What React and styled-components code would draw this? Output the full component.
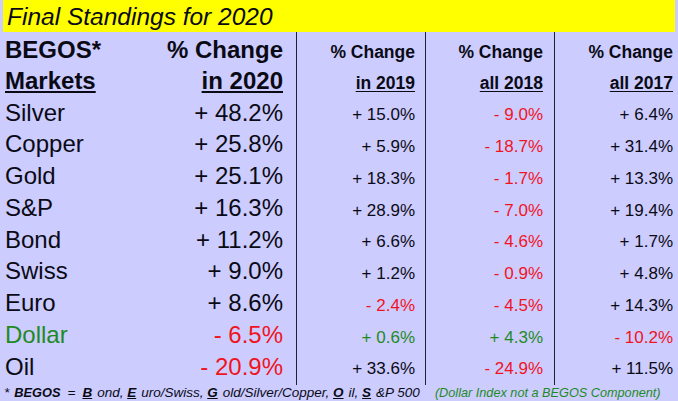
import React from "react";
import styled, { createGlobalStyle } from "styled-components";

const Global = createGlobalStyle`
  html, body { margin: 0; padding: 0; background: #ccccff; }
  body { font-family: "Liberation Sans", Arial, sans-serif; }
`;

const RED = "#f0141e";
const GREEN = "#1f8a1f";
const INK = "#0a0a14";

const Page = styled.div`
  width: 678px;
  height: 401px;
  background: #ccccff;
  display: flex;
  flex-direction: column;
  overflow: hidden;
  color: ${INK};
`;

const TitleBar = styled.div`
  margin: 0 3px;
  height: 32px;
  box-sizing: border-box;
  padding: 1.5px 0 0 4px;
  background: #ffff00;
  font-style: italic;
  font-size: 24.5px;
  line-height: 30px;
  white-space: nowrap;
`;

const Table = styled.div`
  display: grid;
  grid-template-columns: 297px 129px 129px 123px;
`;

const Column = styled.div`
  display: flex;
  flex-direction: column;
  padding-bottom: 3px;
  border-right: ${(p) => (p.$last ? "none" : "1px solid #22222e")};
`;

const Cell = styled.div`
  box-sizing: border-box;
  height: ${(p) => p.$h}px;
  padding: ${(p) => p.$pt}px ${(p) => p.$pr}px 0 5px;
  display: flex;
  justify-content: ${(p) => (p.$split ? "space-between" : "flex-end")};
  align-items: flex-start;
  font-size: ${(p) => (p.$big ? 24 : p.$head ? 17.5 : 17)}px;
  line-height: ${(p) => (p.$big ? 27 : 19)}px;
  font-weight: ${(p) => (p.$head ? 700 : 400)};
  white-space: nowrap;
`;

const Label = styled.span`
  color: ${(p) => p.$color || INK};
`;

const Under = styled.span`
  text-decoration: underline;
  text-underline-offset: 2px;
`;

const Value = styled.span`
  color: ${(p) => p.$color};
`;

const Footer = styled.div`
  height: 16px;
  padding-left: 4px;
  font-size: 13.5px;
  line-height: 16px;
  font-style: italic;
  white-space: nowrap;
`;

const Strong = styled.b`
  font-weight: 700;
  font-size: 12.8px;
  margin-left: 5px;
`;

const Equals = styled.span`
  margin: 0 7px;
`;

const Key = styled.b`
  font-weight: 700;
  text-decoration: underline;
  margin-right: 5px;
`;

const Note = styled.span`
  color: ${GREEN};
  font-size: 12.7px;
  margin-left: 15px;
`;

const rows = [
  ["Silver", 48.2, 15.0, -9.0, 6.4],
  ["Copper", 25.8, 5.9, -18.7, 31.4],
  ["Gold", 25.1, 18.3, -1.7, 13.3],
  ["S&P", 16.3, 28.9, -7.0, 19.4],
  ["Bond", 11.2, 6.6, -4.6, 1.7],
  ["Swiss", 9.0, 1.2, -0.9, 4.8],
  ["Euro", 8.6, -2.4, -4.5, 14.3],
  ["Dollar", -6.5, 0.6, 4.3, -10.2],
  ["Oil", -20.9, 33.6, -24.9, 11.5],
];

const fmt = (v) => `${v < 0 ? "-" : "+"} ${Math.abs(v).toFixed(1)}%`;
const colorOf = (v, name) => (v < 0 ? RED : name === "Dollar" ? GREEN : INK);

const ROW_H = 31.75;

const smallCols = [
  { title: "in 2019", pr: 10 },
  { title: "all 2018", pr: 11 },
  { title: "all 2017", pr: 5 },
];

export default function App() {
  return (
    <>
      <Global />
      <Page>
        <TitleBar>Final Standings for 2020</TitleBar>
        <Table>
          <Column>
            <Cell $h={33} $pt={4.2} $pr={13} $big $head $split>
              <span>BEGOS*</span>
              <span>% Change</span>
            </Cell>
            <Cell $h={31} $pt={2.2} $pr={13} $big $head $split>
              <Under>Markets</Under>
              <Under>in 2020</Under>
            </Cell>
            {rows.map(([name, v]) => (
              <Cell key={name} $h={ROW_H} $pt={2.6} $pr={13} $big $split>
                <Label $color={name === "Dollar" ? GREEN : INK}>{name}</Label>
                <Value $color={colorOf(v, name)}>{fmt(v)}</Value>
              </Cell>
            ))}
          </Column>
          {smallCols.map((c, ci) => (
            <Column key={c.title} $last={ci === smallCols.length - 1}>
              <Cell $h={33} $pt={10.6} $pr={c.pr} $head>
                <span>% Change</span>
              </Cell>
              <Cell $h={31} $pt={9.2} $pr={c.pr} $head>
                <Under>{c.title}</Under>
              </Cell>
              {rows.map((r) => (
                <Cell key={r[0]} $h={ROW_H} $pt={9.3} $pr={c.pr}>
                  <Value $color={colorOf(r[ci + 2], r[0])}>{fmt(r[ci + 2])}</Value>
                </Cell>
              ))}
            </Column>
          ))}
        </Table>
        <Footer>
          *<Strong>BEGOS</Strong>
          <Equals>=</Equals>
          <Key>B</Key>ond, <Key>E</Key>uro/Swiss, <Key>G</Key>old/Silver/Copper,{" "}
          <Key>O</Key>il, <Key>S</Key>&amp;P 500
          <Note>(Dollar Index not a BEGOS Component)</Note>
        </Footer>
      </Page>
    </>
  );
}
